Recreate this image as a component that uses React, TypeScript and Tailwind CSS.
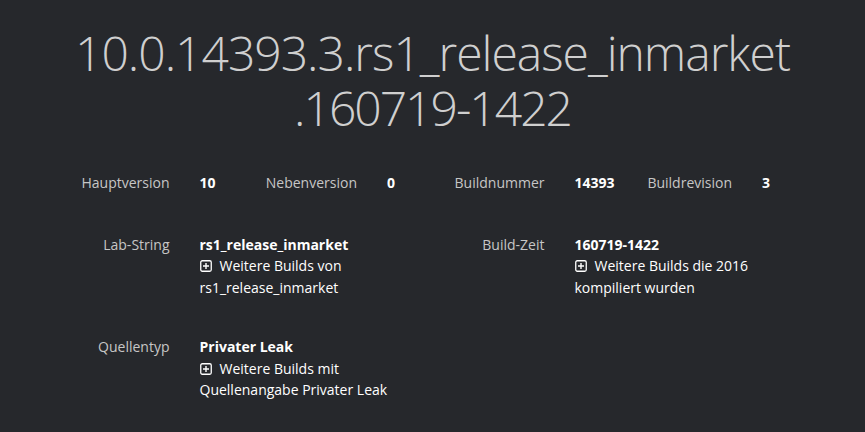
import { ReactNode } from "react";

function PlusBox() {
    return (
        <svg width="12" height="12" viewBox="0 0 12 12" className="inline-block mr-[8px] -mt-[2px] align-middle">
            <rect x="0.75" y="0.75" width="10.5" height="10.5" rx="1.5" fill="none" stroke="currentColor" strokeWidth="1.3" />
            <path d="M6 3v6M3 6h6" stroke="currentColor" strokeWidth="1.4" />
        </svg>
    );
}

function Field({ label, children, wide }: { label: string; children: ReactNode; wide?: boolean }) {
    return (
        <div className={`flex ${wide ? "col-span-2" : ""}`}>
            <div className="w-[112px] shrink-0 text-right text-[#c6c6c6]">{label}</div>
            <div className="pl-[30px] pr-[15px] text-white">{children}</div>
        </div>
    );
}

function More({ text }: { text: string }) {
    return (
        <div>
            <PlusBox />
            {text}
        </div>
    );
}

export default function App() {
    return (
        <div className="w-[865px] h-[432px] bg-[#26282c] overflow-hidden" style={{ fontFamily: "'Open Sans', 'Noto Sans', sans-serif" }}>
            <h1 className="pt-[25px] text-center text-[48px] leading-[55px] font-light text-[#cfcfcf] tracking-[-1px]">
                <div>10.0.14393.3.rs1_release_inmarket</div>
                <div className="tracking-[-2px]">.160719-1422</div>
            </h1>

            <div className="mx-auto w-[750px] mt-[37px] text-[14px] leading-[21.5px]">
                <div className="grid grid-cols-4">
                    <Field label="Hauptversion"><span className="font-bold">10</span></Field>
                    <Field label="Nebenversion"><span className="font-bold">0</span></Field>
                    <Field label="Buildnummer"><span className="font-bold">14393</span></Field>
                    <Field label="Buildrevision"><span className="font-bold">3</span></Field>
                </div>

                <div className="grid grid-cols-4 mt-[40px]">
                    <Field label="Lab-String" wide>
                        <div className="font-bold">rs1_release_inmarket</div>
                        <More text="Weitere Builds von rs1_release_inmarket" />
                    </Field>
                    <Field label="Build-Zeit" wide>
                        <div className="font-bold">160719-1422</div>
                        <More text="Weitere Builds die 2016 kompiliert wurden" />
                    </Field>
                </div>

                <div className="grid grid-cols-4 mt-[38px]">
                    <Field label="Quellentyp" wide>
                        <div className="font-bold">Privater Leak</div>
                        <More text="Weitere Builds mit Quellenangabe Privater Leak" />
                    </Field>
                </div>
            </div>
        </div>
    );
}
